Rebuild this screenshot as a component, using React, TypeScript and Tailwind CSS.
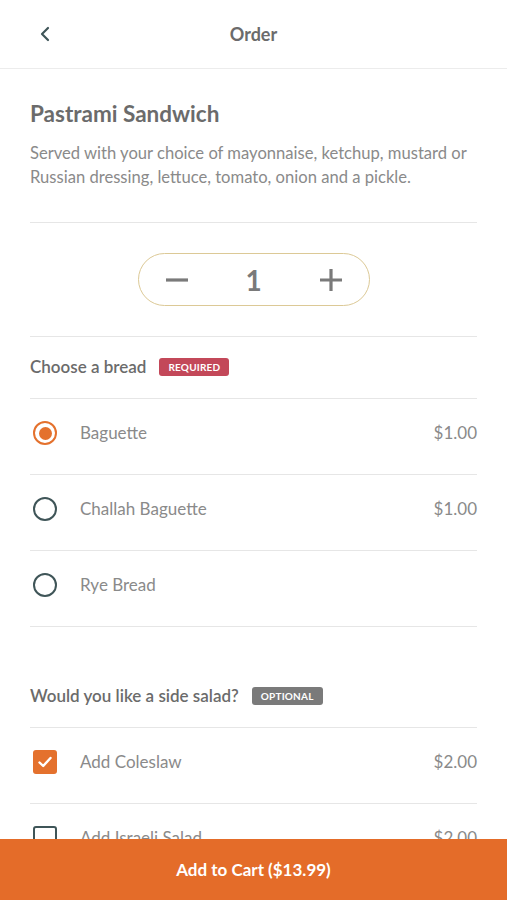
import React from "react";

const font = { fontFamily: "Lato, 'Noto Sans', sans-serif" };

function Radio({ checked }: { checked?: boolean }) {
  return checked ? (
    <div className="w-[24px] h-[24px] rounded-full border-2 border-[#e4712d] flex items-center justify-center">
      <div className="w-[13px] h-[13px] rounded-full bg-[#e4712d]" />
    </div>
  ) : (
    <div className="w-[24px] h-[24px] rounded-full border-2 border-[#3f5558]" />
  );
}

function Check({ checked }: { checked?: boolean }) {
  return checked ? (
    <div className="w-[24px] h-[24px] rounded-[3px] bg-[#e4712d] flex items-center justify-center">
      <svg width="16" height="16" viewBox="0 0 16 16" fill="none">
        <path d="M2.5 8.5 L6.2 12 L13.5 4" stroke="white" strokeWidth="2.4" strokeLinecap="round" strokeLinejoin="round" />
      </svg>
    </div>
  ) : (
    <div className="w-[24px] h-[24px] rounded-[3px] border-2 border-[#3f5558]" />
  );
}

function Row({ control, label, price }: { control: React.ReactNode; label: string; price?: string }) {
  return (
    <div className="h-[76px] border-b border-[#e6e6e6] flex items-center pb-[7px]">
      <div className="w-[50px] flex items-center pl-[3px]">{control}</div>
      <div className="flex-1 text-[17px] text-[#8a8a8a]">{label}</div>
      {price && <div className="text-[17px] text-[#8a8a8a]">{price}</div>}
    </div>
  );
}

function SectionHeader({ title, badge, badgeClass }: { title: string; badge: string; badgeClass: string }) {
  return (
    <div className="h-[62px] border-b border-[#e6e6e6] flex items-center gap-[13px] pb-[1px]">
      <div className="text-[17px] font-semibold text-[#6b6b6b]">{title}</div>
      <div className={`h-[18px] px-[9px] rounded-[3px] flex items-center text-[10px] font-bold text-white tracking-[0.2px] ${badgeClass}`}>
        {badge}
      </div>
    </div>
  );
}

export default function App() {
  return (
    <div className="w-[507px] h-[900px] bg-white relative overflow-hidden" style={font}>
      <div className="h-[69px] border-b border-[#ececec] flex items-center relative">
        <div className="absolute left-[38px] top-[26px]">
          <svg width="14" height="16" viewBox="0 0 14 16" fill="none">
            <path d="M10 2 L4 8 L10 14" stroke="#3f5558" strokeWidth="2.2" strokeLinecap="round" strokeLinejoin="round" />
          </svg>
        </div>
        <div className="flex-1 text-center text-[18px] font-bold text-[#6b6b6b]">Order</div>
      </div>

      <div className="px-[30px]">
        <div className="pt-[30px] text-[22.5px] leading-[30px] font-bold text-[#6b6b6b]">Pastrami Sandwich</div>
        <div className="mt-[12px] text-[16.6px] leading-[24px] text-[#8a8a8a] pb-[33px] border-b border-[#e6e6e6]">
          Served with your choice of mayonnaise, ketchup, mustard or Russian dressing, lettuce, tomato, onion and a pickle.
        </div>

        <div className="py-[30px] flex justify-center border-b border-[#e6e6e6]">
          <div className="w-[232px] h-[53px] rounded-full border-[1.5px] border-[#dcc996] flex items-center justify-between px-[26px]">
            <svg width="24" height="24" viewBox="0 0 24 24">
              <path d="M1 12 H23" stroke="#7a7a7a" strokeWidth="3.2" />
            </svg>
            <div className="text-[28px] font-bold text-[#7a7a7a] leading-none">1</div>
            <svg width="24" height="24" viewBox="0 0 24 24">
              <path d="M1 12 H23 M12 1 V23" stroke="#7a7a7a" strokeWidth="3.2" />
            </svg>
          </div>
        </div>

        <SectionHeader title="Choose a bread" badge="REQUIRED" badgeClass="bg-[#c34859]" />
        <Row control={<Radio checked />} label="Baguette" price="$1.00" />
        <Row control={<Radio />} label="Challah Baguette" price="$1.00" />
        <Row control={<Radio />} label="Rye Bread" />

        <div className="mt-[39px]">
          <SectionHeader title="Would you like a side salad?" badge="OPTIONAL" badgeClass="bg-[#7a7a7a]" />
        </div>
        <Row control={<Check checked />} label="Add Coleslaw" price="$2.00" />
        <Row control={<Check />} label="Add Israeli Salad" price="$2.00" />
      </div>

      <div className="absolute left-0 right-0 bottom-0 h-[61px] bg-[#e46c29] flex items-center justify-center">
        <div className="text-[17px] font-bold text-white">Add to Cart ($13.99)</div>
      </div>
    </div>
  );
}
